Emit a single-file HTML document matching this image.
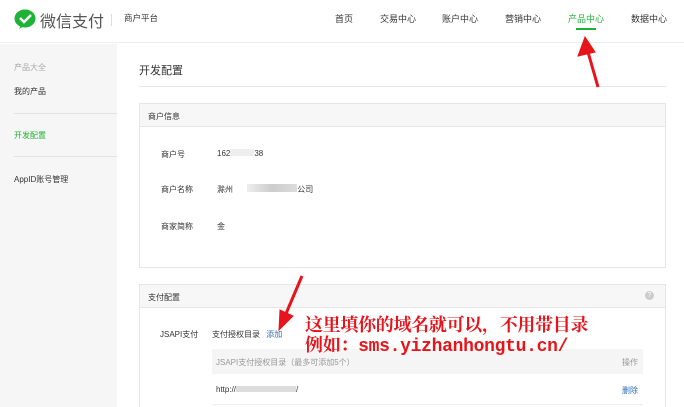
<!DOCTYPE html>
<html style="overflow:hidden;width:684px;height:407px"><head><meta charset="utf-8"><style>
*{margin:0;padding:0;box-sizing:border-box}
body{width:684px;height:407px;overflow:hidden;background:#fff;font-family:"Liberation Sans","Noto Sans CJK SC",sans-serif;font-size:8px;color:#333;position:relative}
.a{position:absolute;white-space:nowrap}
.hd{position:absolute;left:0;top:0;width:684px;height:43px;border-bottom:1px solid #eee;background:#fff}
.sb{position:absolute;left:0;top:44px;width:117px;height:363px;background:#f6f6f6}
.box{position:absolute;left:139px;width:527px;border:1px solid #e6e6e6}
.bh{height:23px;background:#f7f7f7;border-bottom:1px solid #e6e6e6;padding:7px 8px;font-size:8px}
.red{color:#e8141b;font-family:"Liberation Mono","Noto Serif CJK SC",monospace;font-size:18px;font-weight:bold;letter-spacing:-0.3px}
</style></head><body>
<div class="hd">
<svg class="a" style="left:14px;top:9px" width="22" height="20" viewBox="0 0 22 20"><ellipse cx="11" cy="9.5" rx="10.5" ry="9" fill="#20b236"/><path d="M7 16 L5 20 L10 17Z" fill="#20b236"/><path d="M6 9 L10 13 L17 6" stroke="#fff" stroke-width="2.4" fill="none"/></svg>
<div class="a" style="left:40px;top:8px;font-size:16px;color:#555">微信支付</div>
<div class="a" style="left:111px;top:14px;width:1px;height:12px;background:#ddd"></div>
<div class="a" style="left:124px;top:12px;font-size:8.5px">商户平台</div>
<div class="a" style="left:335px;top:12px;font-size:9px">首页</div>
<div class="a" style="left:380px;top:12px;font-size:9px">交易中心</div>
<div class="a" style="left:442px;top:12px;font-size:9px">账户中心</div>
<div class="a" style="left:505px;top:12px;font-size:9px">营销中心</div>
<div class="a" style="left:568px;top:12px;font-size:9px;color:#20b236">产品中心</div>
<div class="a" style="left:576px;top:28px;width:20px;height:2px;background:#20b236"></div>
<div class="a" style="left:631px;top:12px;font-size:9px">数据中心</div>
</div>
<div class="sb">
<div class="a" style="left:14px;top:18px;color:#aaa">产品大全</div>
<div class="a" style="left:14px;top:42px">我的产品</div>
<div class="a" style="left:14px;top:69px;width:103px;height:1px;background:#e3e3e3"></div>
<div class="a" style="left:14px;top:86px;color:#20b236">开发配置</div>
<div class="a" style="left:14px;top:112px;width:103px;height:1px;background:#e3e3e3"></div>
<div class="a" style="left:14px;top:130px">AppID账号管理</div>
</div>
<div class="a" style="left:139px;top:62px;font-size:11px">开发配置</div>
<div class="a" style="left:139px;top:86px;width:527px;height:1px;background:#e6e6e6"></div>
<div class="box" style="top:103px;height:165px"><div class="bh">商户信息</div></div>
<div class="a" style="left:161px;top:149px">商户号</div><div class="a" style="left:217px;top:149px">162<span style="display:inline-block;width:24px;height:7px;background:#eee"></span>38</div>
<div class="a" style="left:161px;top:184px">商户名称</div><div class="a" style="left:217px;top:184px">滁州 <span style="display:inline-block;margin-left:12px;width:50px;height:8px;background:linear-gradient(90deg,#eee,#ccc,#ddd)"></span>公司</div>
<div class="a" style="left:161px;top:221px">商家简称</div><div class="a" style="left:217px;top:221px">金</div>
<div class="box" style="top:284px;height:130px"><div class="bh">支付配置</div></div>
<div class="a" style="left:645px;top:291px;width:9px;height:9px;border-radius:50%;background:#ccc;color:#fff;font-size:7px;text-align:center;line-height:9px">?</div>
<div class="a" style="left:160px;top:329px">JSAPI支付</div>
<div class="a" style="left:212px;top:329px">支付授权目录 <span style="color:#2f6bb5;margin-left:4px">添加</span></div>
<div class="a" style="left:212px;top:349px;width:431px;height:25px;background:#f5f5f5"></div>
<div class="a" style="left:216px;top:357px;color:#999">JSAPI支付授权目录（最多可添加5个）</div>
<div class="a" style="left:622px;top:357px;color:#999">操作</div>
<div class="a" style="left:216px;top:385px">http://<span style="display:inline-block;width:60px;height:6px;background:#ddd"></span>/</div>
<div class="a" style="left:622px;top:385px;color:#2f6bb5">删除</div>
<div class="a" style="left:212px;top:404px;width:431px;height:1px;background:#eee"></div>
<div class="a red" style="left:305px;top:311px">这里填你的域名就可以，不用带目录</div>
<div class="a red" style="left:305px;top:331px">例如：sms.yizhanhongtu.cn/</div>
<svg class="a" style="left:0;top:0" width="684" height="407"><g fill="#e8141b" stroke="#e8141b">
<line x1="598" y1="87" x2="588" y2="52" stroke-width="3"/><path d="M585 37 L578 56 L595 52Z"/>
<line x1="302" y1="276" x2="285" y2="316" stroke-width="3"/><path d="M279 330 L280 310 L293 316Z"/></g></svg>
</body></html>
